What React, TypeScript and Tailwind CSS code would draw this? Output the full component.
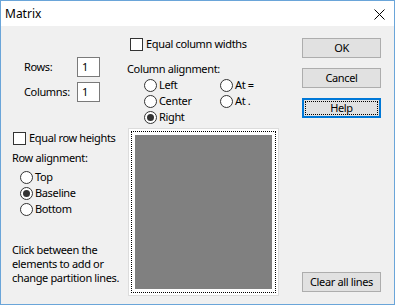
import React from "react";

const Radio: React.FC<{ label: string; checked?: boolean }> = ({ label, checked }) => (
  <div className="flex h-[16px] items-center">
    <span className="flex h-[13px] w-[13px] items-center justify-center rounded-full border border-[#333333] bg-white">
      {checked && <span className="h-[7px] w-[7px] rounded-full bg-[#333333]" />}
    </span>
    <span className="ml-[2px]">{label}</span>
  </div>
);

const Check: React.FC<{ label: string }> = ({ label }) => (
  <div className="flex h-[16px] items-center">
    <span className="h-[13px] w-[13px] border border-[#333333] bg-white" />
    <span className="ml-[3px]">{label}</span>
  </div>
);

const Btn: React.FC<{ children: React.ReactNode; focused?: boolean; className?: string }> = ({
  children,
  focused,
  className,
}) =>
  focused ? (
    <div className={`flex h-[20px] w-[79px] border-2 border-[#0078d7] bg-[#e1e1e1] p-[1px] ${className ?? ""}`}>
      <div className="flex flex-1 items-center justify-center border border-dotted border-black">
        {children}
      </div>
    </div>
  ) : (
    <div
      className={`flex h-[20px] w-[79px] items-center justify-center border border-[#adadad] bg-[#e1e1e1] ${className ?? ""}`}
    >
      {children}
    </div>
  );

export default function App() {
  return (
    <div
      className="flex h-[305px] w-[395px] flex-col border border-[#6aa5d9] text-[11px] leading-[16px] tracking-[-0.35px] whitespace-nowrap text-black"
      style={{ fontFamily: "'Noto Sans', sans-serif" }}
    >
      {/* title bar */}
      <div className="flex h-[25px] items-center justify-between bg-white pl-[4px] pr-[9px] tracking-normal">
        <span className="text-[12px]">Matrix</span>
        <svg width="11" height="11" viewBox="0 0 11 11" className="mt-[1px]">
          <path d="M0.5 0.5 L10.5 10.5 M10.5 0.5 L0.5 10.5" stroke="#000" strokeWidth="1" />
        </svg>
      </div>

      <div className="flex flex-1 bg-[#f0f0f0]">
        {/* left column */}
        <div className="flex w-[126px] flex-col">
          <div className="mt-[31px] grid grid-cols-[53px_23px] gap-y-[5px] pl-[23px]">
            <span className="flex h-[20px] items-center">Rows:</span>
            <span className="flex h-[20px] items-center border border-[#7a7a7a] bg-white pl-[4px]">1</span>
            <span className="flex h-[20px] items-center">Columns:</span>
            <span className="flex h-[20px] items-center border border-[#7a7a7a] bg-white pl-[4px]">1</span>
          </div>
          <div className="mt-[28px] pl-[12px]">
            <Check label="Equal row heights" />
          </div>
          <div className="mt-[4px] pl-[11px]">Row alignment:</div>
          <div className="mt-[3px] pl-[19px]">
            <Radio label="Top" />
            <Radio label="Baseline" checked />
            <Radio label="Bottom" />
          </div>
          <div className="mt-[26px] pl-[11px] leading-[14px]">
            <div>Click between the</div>
            <div>elements to add or</div>
            <div>change partition lines.</div>
          </div>
        </div>

        {/* middle column */}
        <div className="flex w-[153px] flex-col">
          <div className="mt-[10px] pl-[3px]">
            <Check label="Equal column widths" />
          </div>
          <div className="mt-[9px]">Column alignment:</div>
          <div className="grid grid-cols-[76px_1fr] pl-[17px]">
            <Radio label="Left" />
            <Radio label="At =" />
            <Radio label="Center" />
            <Radio label="At ." />
            <Radio label="Right" checked />
          </div>
          <div className="ml-[1px] mt-[3px] flex h-[168px] w-[151px] border border-[#dcdcdc] bg-white p-[2px]">
            <div className="flex flex-1 border border-dotted border-black p-[3px]">
              <div className="flex-1 bg-[#808080]" />
            </div>
          </div>
        </div>

        {/* right column */}
        <div className="flex flex-1 flex-col pl-[22px]">
          <Btn className="mt-[12px]">OK</Btn>
          <Btn className="mt-[10px]">Cancel</Btn>
          <Btn className="mt-[10px]" focused>
            Help
          </Btn>
          <Btn className="mb-[12px] mt-auto">Clear all lines</Btn>
        </div>
      </div>
    </div>
  );
}
